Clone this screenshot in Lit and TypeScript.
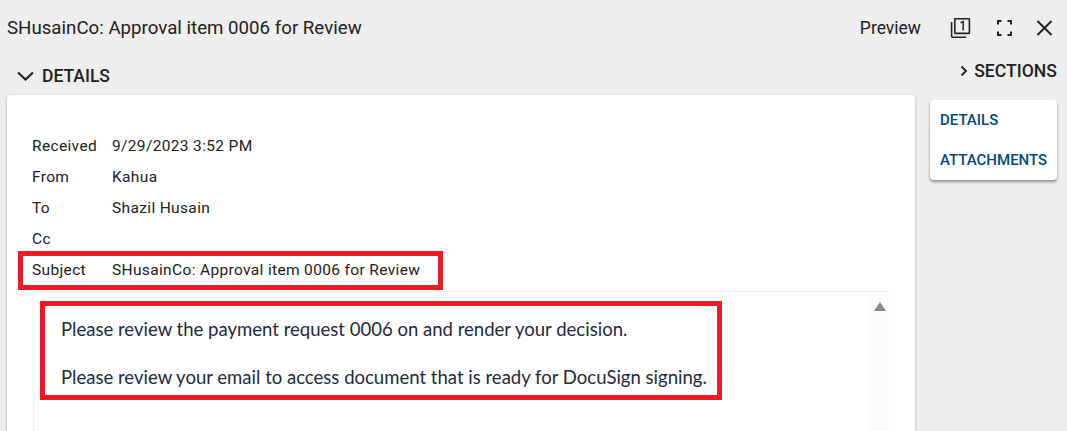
import { LitElement, html, css } from 'lit';
import { customElement } from 'lit/decorators.js';

const META = [
  ['Received', '9/29/2023 3:52 PM'],
  ['From', 'Kahua'],
  ['To', 'Shazil Husain'],
  ['Cc', ''],
];

@customElement('app-root')
export class AppRoot extends LitElement {
  static styles = css`
    :host {
      display: block;
      width: 1067px;
      height: 431px;
      overflow: hidden;
      background: #eeeeee;
      font-family: Roboto, sans-serif;
      color: #212121;
    }
    .header {
      display: flex;
      align-items: center;
      height: 56px;
      padding: 0 12px 0 7px;
      box-sizing: border-box;
    }
    .title {
      flex: 1;
      font-size: 18.7px;
    }
    .preview {
      font-size: 17.5px;
      margin-right: 28px;
    }
    .actions {
      display: flex;
      align-items: center;
      gap: 20px;
    }
    .actions svg {
      display: block;
    }
    .actions .copy {
      margin-right: 4px;
    }
    .main {
      display: grid;
      grid-template-columns: 908px 127px;
      column-gap: 15px;
      padding-left: 7px;
    }
    .details-head {
      display: flex;
      align-items: center;
      gap: 8px;
      height: 39px;
      padding-left: 9px;
      font-size: 17.5px;
      font-weight: 500;
    }
    .card {
      background: #fff;
      border-radius: 4px 4px 0 0;
      box-shadow: 0 1px 3px rgba(0, 0, 0, 0.3);
      height: 340px;
      padding: 35px 0 0 11px;
      box-sizing: border-box;
    }
    .row {
      display: flex;
      align-items: center;
      height: 31px;
      padding-left: 14px;
      font-size: 15.5px;
      letter-spacing: 0.35px;
    }
    .row .label {
      width: 80px;
    }
    .subject {
      width: 425px;
      height: 39px;
      margin-top: -3px;
      box-sizing: border-box;
      border: 5px solid #ed1c24;
      padding: 0 0 2px 9px;
    }
    .email {
      position: relative;
      margin: 1px 26px 0 15px;
      height: 160px;
      border-top: 1px solid #eeeeee;
      border-left: 1px solid #eeeeee;
      padding: 9px 0 0 6px;
    }
    .highlight {
      width: 682px;
      height: 99px;
      box-sizing: border-box;
      border: 5px solid #ed1c24;
      padding: 11px 0 0 16px;
      font-family: Lato, sans-serif;
      font-size: 18.55px;
      color: #1f2a3c;
    }
    .highlight p {
      margin: 0 0 24px;
      line-height: 24px;
      white-space: nowrap;
    }
    .scrollbar {
      position: absolute;
      top: 0;
      right: 0;
      bottom: 0;
      width: 19px;
      background: #fcfcfc;
    }
    .scrollbar svg {
      display: block;
      margin: 10px 0 0 4px;
    }
    .sections-head {
      display: flex;
      align-items: center;
      justify-content: flex-end;
      gap: 6px;
      height: 30px;
      font-size: 17.6px;
      font-weight: 500;
      margin-bottom: 14px;
    }
    .nav {
      background: #fff;
      border-radius: 4px;
      box-shadow: 0 2px 3px rgba(0, 0, 0, 0.4);
      height: 80px;
      padding: 0 10px;
      box-sizing: border-box;
    }
    .nav a {
      display: flex;
      align-items: center;
      height: 40px;
      font-size: 15px;
      font-weight: 500;
      color: #004b7d;
    }
  `;

  render() {
    return html`
      <div class="header">
        <div class="title">SHusainCo: Approval item 0006 for Review</div>
        <div class="preview">Preview</div>
        <div class="actions">
          <svg class="copy" width="22" height="22" viewBox="0 0 22 22" fill="none" stroke="#212121" stroke-width="1.6">
            <rect x="5.8" y="1.8" width="14.6" height="14.6" rx="0.5"></rect>
            <path d="M2.6 5v14.2a1 1 0 0 0 1 1h13.6"></path>
            <path d="M11.6 5.8l2.6-1.2V13.5" stroke-width="1.5"></path>
          </svg>
          <svg width="20" height="20" viewBox="0 0 20 20" fill="none" stroke="#212121" stroke-width="2">
            <path d="M3 6.5V3h3.5M12.5 3H16v3.5M16 13.5V17h-3.5M6.5 17H3v-3.5"></path>
          </svg>
          <svg width="20" height="20" viewBox="0 0 20 20" fill="none" stroke="#212121" stroke-width="2">
            <path d="M2.5 3l14 14M16.5 3l-14 14"></path>
          </svg>
        </div>
      </div>
      <div class="main">
        <div>
          <div class="details-head">
            <svg width="18" height="12" viewBox="0 0 18 12" fill="none" stroke="#212121" stroke-width="2.2">
              <path d="M2 2.5l7.5 7 7.5-7"></path>
            </svg>
            DETAILS
          </div>
          <div class="card">
            ${META.map(
              ([label, value]) => html`
                <div class="row">
                  <div class="label">${label}</div>
                  <div>${value}</div>
                </div>
              `
            )}
            <div class="row subject">
              <div class="label">Subject</div>
              <div>SHusainCo: Approval item 0006 for Review</div>
            </div>
            <div class="email">
              <div class="highlight">
                <p>Please review the payment request 0006 on and render your decision.</p>
                <p>Please review your email to access document that is ready for DocuSign signing.</p>
              </div>
              <div class="scrollbar">
                <svg width="12" height="9" viewBox="0 0 12 9"><path d="M6 0l6 9H0z" fill="#8a8a8a"></path></svg>
              </div>
            </div>
          </div>
        </div>
        <div>
          <div class="sections-head">
            <svg width="8" height="12" viewBox="0 0 8 12" fill="none" stroke="#212121" stroke-width="1.8">
              <path d="M1.5 1.5L6 6l-4.5 4.5"></path>
            </svg>
            SECTIONS
          </div>
          <div class="nav">
            <a>DETAILS</a>
            <a>ATTACHMENTS</a>
          </div>
        </div>
      </div>
    `;
  }
}
